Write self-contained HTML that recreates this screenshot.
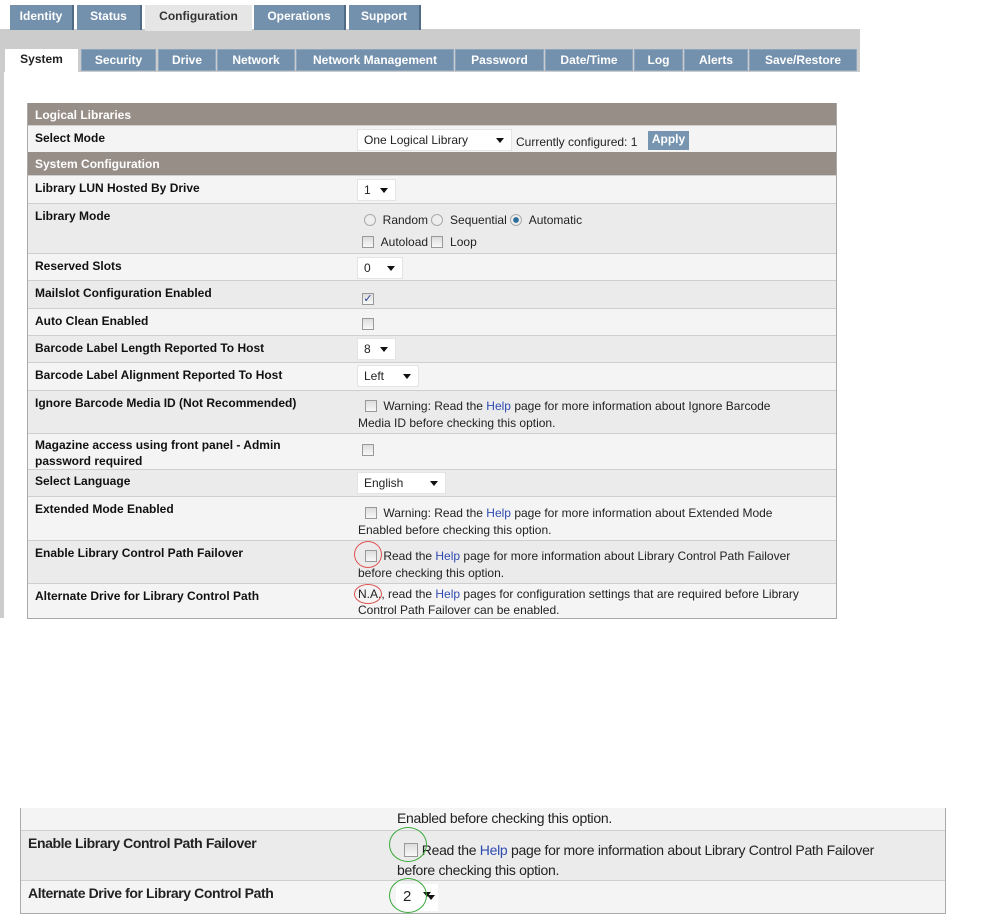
<!DOCTYPE html>
<html><head><meta charset="utf-8"><style>
*{margin:0;padding:0;box-sizing:border-box}
body{width:982px;height:923px;background:#fff;font-family:"Liberation Sans",Arial,sans-serif;font-size:12px;color:#222;position:relative;overflow:hidden}
.a{position:absolute}
.tab{position:absolute;background:#7390ac;color:#fff;font-weight:bold;font-size:12px;text-align:center;border-right:2px solid #4f6b86}
.st{position:absolute;top:49px;height:22px;line-height:20px;background:#7390ac;color:#fff;font-weight:bold;font-size:12px;text-align:center;border:1px solid #8ea6bd}
.row{position:absolute;left:28px;width:808px;border-top:1px solid #cfcfcf}
.l{background:#f4f4f4}.d{background:#ebebeb}
.lab{position:absolute;left:7px;top:4px;font-weight:bold;font-size:12px;color:#111;line-height:16px}
.val{position:absolute;left:330px;top:4px;font-size:12px;line-height:16px;color:#222}
.hd{position:absolute;left:28px;width:808px;background:#978e88;color:#fff;font-weight:bold;font-size:12px;padding-left:7px}
.sel{position:absolute;background:#fff;border:1px solid #e4e4e4;height:22px;font-size:12px;line-height:20px;padding-left:6px}
.sel:after{content:"";position:absolute;right:7px;top:8px;border-left:4px solid transparent;border-right:4px solid transparent;border-top:5px solid #111}
.cb{display:inline-block;width:12px;height:12px;border:1px solid #999;background:linear-gradient(#ddd,#f8f8f8);vertical-align:-2px}
.rd{display:inline-block;width:12px;height:12px;border:1px solid #aaa;border-radius:50%;background:#eee;vertical-align:-2px}
a{color:#2f4bb0;text-decoration:none}
.circ{position:absolute;border:1.5px solid #e05050;border-radius:50%}
.gc{position:absolute;border:1.5px solid #3aaa3a;border-radius:50%}
</style></head><body>
<div class="a" style="left:0;top:29px;width:860px;height:43px;background:#cccccc"></div>
<div class="a" style="left:0;top:72px;width:4px;height:546px;background:#cccccc"></div>
<div class="a" style="left:4px;top:72px;width:856px;height:546px;background:#fff"></div>

<div class="tab" style="left:10px;top:5px;width:64px;height:25px;line-height:22px">Identity</div>
<div class="tab" style="left:77px;top:5px;width:65px;height:25px;line-height:22px">Status</div>
<div class="a" style="left:145px;top:5px;width:107px;height:26px;line-height:22px;background:#e6e6e6;color:#333;font-weight:bold;text-align:center">Configuration</div>
<div class="tab" style="left:254px;top:5px;width:92px;height:25px;line-height:22px">Operations</div>
<div class="tab" style="left:349px;top:5px;width:72px;height:25px;line-height:22px">Support</div>

<div class="a" style="left:5px;top:49px;width:73px;height:24px;line-height:20px;background:#fff;color:#222;font-weight:bold;text-align:center">System</div>
<div class="st" style="left:81px;width:75px">Security</div>
<div class="st" style="left:158px;width:58px">Drive</div>
<div class="st" style="left:217px;width:78px">Network</div>
<div class="st" style="left:296px;width:158px">Network Management</div>
<div class="st" style="left:455px;width:89px">Password</div>
<div class="st" style="left:545px;width:88px">Date/Time</div>
<div class="st" style="left:634px;width:49px">Log</div>
<div class="st" style="left:684px;width:64px">Alerts</div>
<div class="st" style="left:749px;width:108px">Save/Restore</div>

<div class="a" style="left:27px;top:103px;width:810px;height:516px;border:1px solid #aaa;border-top:none"></div>
<div class="hd" style="top:103px;height:22px;line-height:24px">Logical Libraries</div>
<div class="row l" style="top:125px;height:27px"><div class="lab">Select Mode</div>
<div class="sel" style="left:329px;top:3px;width:155px">One Logical Library</div>
<div class="val" style="left:488px;top:8px">Currently configured: 1</div>
<div class="a" style="left:620px;top:5px;width:41px;height:19px;background:#7795b0;color:#fff;font-weight:bold;text-align:center;line-height:17px">Apply</div></div>
<div class="hd" style="top:152px;height:23px;line-height:24px">System Configuration</div>

<div class="row l" style="top:175px;height:28px"><div class="lab">Library LUN Hosted By Drive</div><div class="sel" style="left:329px;top:3px;width:39px">1</div></div>
<div class="row d" style="top:203px;height:50px"><div class="lab">Library Mode</div>
<div class="val" style="left:336px;top:8px"><span class="rd"></span> &nbsp;Random <span class="rd"></span> &nbsp;Sequential <span class="rd" style="background:radial-gradient(#2a6c9a 35%,#eee 45%)"></span> &nbsp;Automatic</div>
<div class="val" style="left:334px;top:30px"><span class="cb"></span> &nbsp;Autoload <span class="cb"></span> &nbsp;Loop</div></div>
<div class="row l" style="top:253px;height:27px"><div class="lab">Reserved Slots</div><div class="sel" style="left:329px;top:3px;width:46px">0</div></div>
<div class="row d" style="top:280px;height:28px"><div class="lab">Mailslot Configuration Enabled</div><div class="val" style="left:334px;top:7px"><span class="cb" style="color:#2a3f9a;font-size:11px;line-height:10px;text-align:center">✓</span></div></div>
<div class="row l" style="top:308px;height:27px"><div class="lab">Auto Clean Enabled</div><div class="val" style="left:334px;top:7px"><span class="cb"></span></div></div>
<div class="row d" style="top:335px;height:27px"><div class="lab">Barcode Label Length Reported To Host</div><div class="sel" style="left:329px;top:2px;width:39px">8</div></div>
<div class="row l" style="top:362px;height:28px"><div class="lab">Barcode Label Alignment Reported To Host</div><div class="sel" style="left:329px;top:2px;width:62px">Left</div></div>
<div class="row d" style="top:390px;height:43px"><div class="lab">Ignore Barcode Media ID (Not Recommended)</div><div class="val" style="top:7px;width:445px;line-height:17px">&nbsp; <span class="cb"></span> &nbsp;Warning: Read the <a>Help</a> page for more information about Ignore Barcode Media ID before checking this option.</div></div>
<div class="row l" style="top:433px;height:36px"><div class="lab" style="top:3px">Magazine access using front panel - Admin<br>password required</div><div class="val" style="left:334px;top:8px"><span class="cb"></span></div></div>
<div class="row d" style="top:469px;height:27px"><div class="lab" style="top:3px">Select Language</div><div class="sel" style="left:329px;top:2px;width:89px">English</div></div>
<div class="row l" style="top:496px;height:44px"><div class="lab">Extended Mode Enabled</div><div class="val" style="top:8px;width:445px;line-height:17px">&nbsp; <span class="cb"></span> &nbsp;Warning: Read the <a>Help</a> page for more information about Extended Mode Enabled before checking this option.</div></div>
<div class="row d" style="top:540px;height:43px"><div class="lab">Enable Library Control Path Failover</div><div class="val" style="top:7px;width:465px;line-height:17px">&nbsp; <span class="cb"></span> &nbsp;Read the <a>Help</a> page for more information about Library Control Path Failover before checking this option.</div></div>
<div class="row l" style="top:583px;height:35px"><div class="lab">Alternate Drive for Library Control Path</div><div class="val" style="top:2px;width:475px;line-height:16px">N.A., read the <a>Help</a> pages for configuration settings that are required before Library Control Path Failover can be enabled.</div></div>
<div class="circ" style="left:354px;top:541px;width:28px;height:27px"></div>
<div class="circ" style="left:354px;top:584px;width:28px;height:20px"></div>

<div class="a" style="left:20px;top:808px;width:926px;height:106px;border:1px solid #aaa;border-top:none"></div>
<div class="a" style="left:21px;top:808px;width:924px;height:22px;background:#f4f4f4"><div class="a" style="left:376px;top:2px;font-size:14px;letter-spacing:-0.3px">Enabled before checking this option.</div></div>
<div class="a" style="left:21px;top:830px;width:924px;height:50px;background:#ebebeb;border-top:1px solid #cfcfcf">
<div class="a" style="left:7px;top:4px;font-size:14px;font-weight:bold;letter-spacing:-0.4px">Enable Library Control Path Failover</div>
<div class="a" style="left:376px;top:9px;width:515px;font-size:14px;line-height:20px;letter-spacing:-0.3px">&nbsp; <span class="cb" style="width:14px;height:14px"></span>&nbsp;Read the <a>Help</a> page for more information about Library Control Path Failover before checking this option.</div></div>
<div class="a" style="left:21px;top:880px;width:924px;height:33px;background:#f4f4f4;border-top:1px solid #cfcfcf">
<div class="a" style="left:7px;top:4px;font-size:14px;font-weight:bold;letter-spacing:-0.4px">Alternate Drive for Library Control Path</div>
<div class="sel" style="left:375px;top:3px;width:42px;height:27px;font-size:15px;line-height:26px;border:none"></div>
<div class="a" style="left:382px;top:7px;font-size:15px">2</div>
<div class="a" style="left:406px;top:14px;border-left:4px solid transparent;border-right:4px solid transparent;border-top:5px solid #111"></div></div>
<div class="gc" style="left:389px;top:827px;width:38px;height:35px"></div>
<div class="gc" style="left:389px;top:878px;width:38px;height:35px"></div>
</body></html>
